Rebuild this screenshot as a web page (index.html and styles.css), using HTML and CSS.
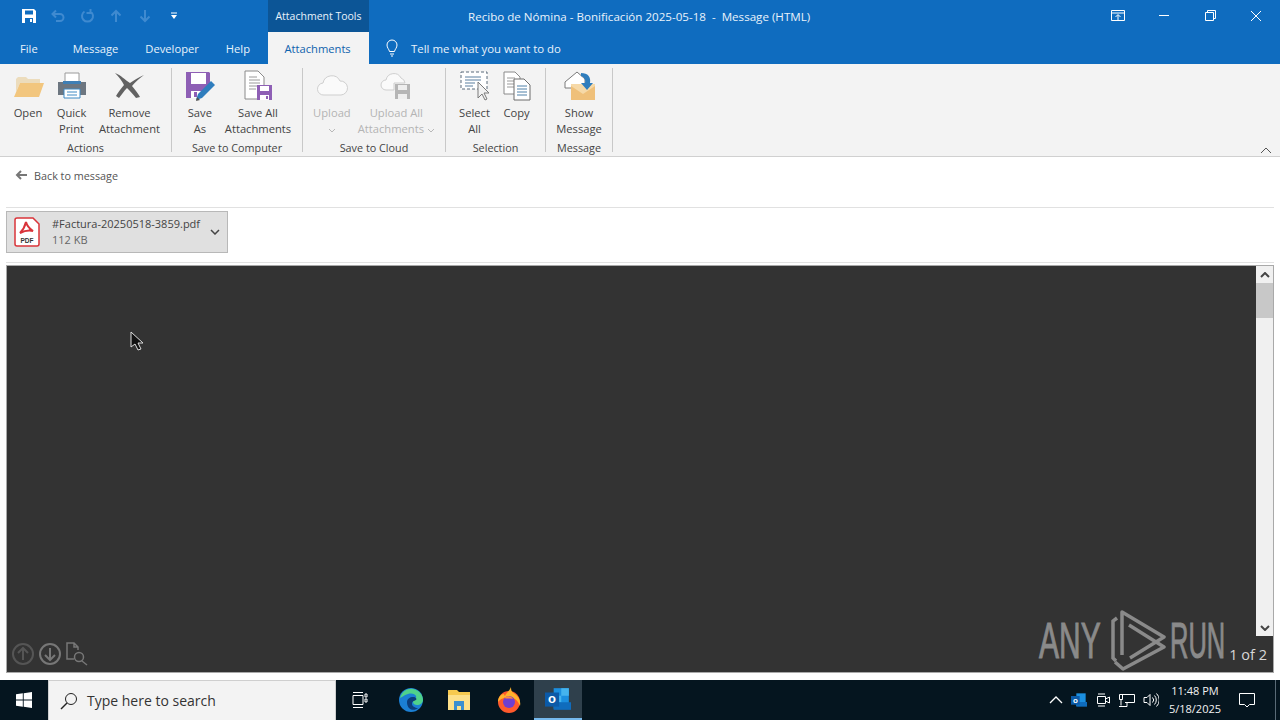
FILE: index.html
```html
<!DOCTYPE html>
<html lang="es">
<head>
  <meta charset="UTF-8" />
  <title>Recibo de Nómina - Bonificación 2025-05-18 - Message (HTML)</title>
  <link rel="stylesheet" href="styles.css">
</head>
<body>
  <div class="window">
    <div class="title-bar">
      <div class="qat">
        <svg class="qat-save" width="16" height="16" viewBox="0 0 16 16"><path d="M1 1h12l2 2v12H1z" fill="#fff"/><path d="M4 2.500h8v4H4z" fill="#0f6cbf"/><path d="M4 10h8v5H4z" fill="#0f6cbf"/><path d="M9 11h2v3H9z" fill="#fff"/></svg>
        <svg class="qat-dim" width="16" height="16" viewBox="0 0 16 16"><path d="M3 6h7a3.500 3.500 0 0 1 0 7H6M6 2.500 2.500 6 6 9.500" fill="none" stroke="#3f8ad0" stroke-width="2"/></svg>
        <svg class="qat-dim" width="16" height="16" viewBox="0 0 16 16"><path d="M11.500 3.500a5.500 5.500 0 1 1-6 0M11.500 1v4h-4" fill="none" stroke="#3f8ad0" stroke-width="2"/></svg>
        <svg class="qat-dim" width="16" height="16" viewBox="0 0 16 16"><path d="M8 14V3M3.500 7.500 8 3l4.500 4.500" fill="none" stroke="#3f8ad0" stroke-width="2"/></svg>
        <svg class="qat-dim" width="16" height="16" viewBox="0 0 16 16"><path d="M8 2v11M3.500 8.500 8 13l4.500-4.500" fill="none" stroke="#3f8ad0" stroke-width="2"/></svg>
        <svg class="qat-more" width="16" height="16" viewBox="0 0 16 16"><path d="M5 4.500h6v1H5zM5 7h6L8 11z" fill="#fff"/></svg>
      </div>
      <div class="tool-tab">Attachment Tools</div>
      <div class="doc-title">Recibo de Nómina - Bonificación 2025-05-18&nbsp; - &nbsp;Message (HTML)</div>
      <div class="win-controls">
        <svg width="46" height="32" viewBox="0 0 46 32"><path d="M16.500 10.500h13v10h-13zM16.500 13h13M23 20v-5M20.500 17l2.500-2.500 2.500 2.500" fill="none" stroke="#fff"/></svg>
        <svg width="46" height="32" viewBox="0 0 46 32"><path d="M18 15.500h10" stroke="#fff"/></svg>
        <svg width="46" height="32" viewBox="0 0 46 32"><path d="M18.500 12.500h8v8h-8zM20.500 12.500v-2h8v8h-2" fill="none" stroke="#fff"/></svg>
        <svg width="46" height="32" viewBox="0 0 46 32"><path d="M18 11l10 10M28 11 18 21" stroke="#fff"/></svg>
      </div>
    </div>

    <div class="tab-row">
      <span class="tab tab-file">File</span>
      <span class="tab tab-message">Message</span>
      <span class="tab tab-dev">Developer</span>
      <span class="tab tab-help">Help</span>
      <span class="tab tab-active">Attachments</span>
      <svg class="bulb" width="16" height="18" viewBox="0 0 16 18"><path d="M5.500 12.500C5 10 3 9 3 6a5 5 0 0 1 10 0c0 3-2 4-2.500 6.500zM6 15h4M7 17h2" fill="none" stroke="#fff"/></svg>
      <span class="tell">Tell me what you want to do</span>
    </div>

    <div class="ribbon">
      <div class="group group-actions">
        <div class="buttons">
          <div class="rb">
            <svg width="32" height="32" viewBox="0 0 32 32"><path d="M4 22V9l2-2h8l2 2h12v4H8z" fill="#ecdcbc"/><path d="M2 27 8 13h24l-5 14z" fill="#f2c67e"/></svg>
            <span>Open</span>
          </div>
          <div class="rb">
            <svg width="32" height="32" viewBox="0 0 32 32"><path d="M9 3h14v9H9z" fill="#fff" stroke="#9a9a9a"/><path d="M2 12h28v13H2z" fill="#6d7680"/><path d="M7 11h18v3H7z" fill="#3f7fb5"/><path d="M8 19h16v9H8z" fill="#fff" stroke="#3f8ac4"/><path d="M11 22h10M11 25h10" stroke="#3f8ac4"/></svg>
            <span>Quick<br>Print</span>
          </div>
          <div class="rb">
            <svg width="32" height="32" viewBox="0 0 32 32"><path d="M2 3c6 2 10 7 15 10 4-3 8-5 14-8-5 4-9 7-12 11 3 4 6 7 8 11l-4 1c-3-4-6-7-9-10-3 3-5 6-8 10l-3-2c2-4 5-7 8-11C9 11 6 7 2 3z" fill="#626262"/></svg>
            <span>Remove<br>Attachment</span>
          </div>
        </div>
        <div class="group-name">Actions</div>
      </div>

      <div class="group group-computer">
        <div class="buttons">
          <div class="rb">
            <svg width="32" height="32" viewBox="0 0 32 32"><path d="M2 2h23l1 1v12L12 28H2z" fill="#8e5fb5"/><path d="M7 3h15v11H7z" fill="#fff"/><path d="M7 21h11v7H7z" fill="#fff"/><path d="M10 22h3v5h-3z" fill="#8e5fb5"/><path d="M12 30l2-6 13-13 4 4-13 13z" fill="#2f7dbd"/><path d="M12 31l1-4 3 3z" fill="#555"/></svg>
            <span>Save<br>As</span>
          </div>
          <div class="rb">
            <svg width="32" height="32" viewBox="0 0 32 32"><path d="M3 1h13l6 6v22H3z" fill="#fff" stroke="#8a8a8a"/><path d="M7 7h8M7 10h11M7 13h11M7 16h11M7 19h7" stroke="#9a9a9a"/><path d="M15 15h15v15H15z" fill="#8e5fb5"/><path d="M18 16h9v5h-9zM18 25h9v5h-9z" fill="#fff"/><path d="M24 26h2v3h-2z" fill="#8e5fb5"/></svg>
            <span>Save All<br>Attachments</span>
          </div>
        </div>
        <div class="group-name">Save to Computer</div>
      </div>

      <div class="group group-cloud">
        <div class="buttons">
          <div class="rb rb-off">
            <svg width="32" height="32" viewBox="0 0 32 32"><path d="M8 25a6 6 0 0 1-1-12 9 9 0 0 1 17-2 7 7 0 0 1 1 14z" fill="#fafafa" stroke="#cfcfcf"/></svg>
            <span>Upload<br><svg class="drop" width="8" height="5" viewBox="0 0 8 5"><path d="M1 1l3 3 3-3" fill="none" stroke="#b8b8b8"/></svg></span>
          </div>
          <div class="rb rb-off">
            <svg width="32" height="32" viewBox="0 0 32 32"><path d="M6 20a5 5 0 0 1 0-10 8 8 0 0 1 15-2 6 6 0 0 1 4 5H14v7z" fill="#fafafa" stroke="#cfcfcf"/><path d="M15 14h15v15H15z" fill="#b5b5b5"/><path d="M18 15h9v5h-9zM18 24h9v5h-9z" fill="#eee"/></svg>
            <span>Upload All<br>Attachments <svg class="drop" width="8" height="5" viewBox="0 0 8 5"><path d="M1 1l3 3 3-3" fill="none" stroke="#b8b8b8"/></svg></span>
          </div>
        </div>
        <div class="group-name">Save to Cloud</div>
      </div>

      <div class="group group-selection">
        <div class="buttons">
          <div class="rb">
            <svg width="32" height="32" viewBox="0 0 32 32"><path d="M2 2h26v17H2z" fill="#fff" stroke="#5b6b7a" stroke-dasharray="3 2"/><path d="M6 7h16M6 10h16M6 13h10M6 16h8" stroke="#5b7f9f"/><path d="M19 12v16l4-4 3 6 2-1-3-6h5z" fill="#f2f2f2" stroke="#7a7a7a"/></svg>
            <span>Select<br>All</span>
          </div>
          <div class="rb">
            <svg width="32" height="32" viewBox="0 0 32 32"><path d="M3 2h11l5 5v17H3z" fill="#fff" stroke="#8a8a8a"/><path d="M6 8h8M6 11h10M6 14h10M6 17h10" stroke="#9a9a9a"/><path d="M13 9h10l6 6v15H13z" fill="#fff" stroke="#6d6d6d"/><path d="M16 16h10M16 19h10M16 22h10M16 25h10" stroke="#4e80a8"/></svg>
            <span>Copy</span>
          </div>
        </div>
        <div class="group-name">Selection</div>
      </div>

      <div class="group group-message">
        <div class="buttons">
          <div class="rb">
            <svg width="32" height="32" viewBox="0 0 32 32"><path d="M2 12 14 2l8 7v9H2z" fill="#fff" stroke="#7a7a7a"/><path d="M8 14h24v16H8z" fill="#efc07a"/><path d="M8 16l12 8 12-8v-2H8z" fill="#f6d9a8"/><path d="M18 3c7 0 10 4 9 10h3l-6 7-6-7h4c1-3-1-6-4-7z" fill="#2f7dbd"/></svg>
            <span>Show<br>Message</span>
          </div>
        </div>
        <div class="group-name">Message</div>
      </div>

      <svg class="collapse" width="12" height="8" viewBox="0 0 12 8"><path d="M1 7l5-5 5 5" fill="none" stroke="#555"/></svg>
    </div>

    <div class="back-row">
      <svg width="12" height="10" viewBox="0 0 12 10"><path d="M12 5H3M6 1 2 5l4 4" fill="none" stroke="#777" stroke-width="2"/></svg>
      <span>Back to message</span>
    </div>

    <div class="attach-row">
      <div class="chip">
        <svg width="26" height="30" viewBox="0 0 26 30"><path d="M3 1h16l6 6v20a2 2 0 0 1-2 2H3a2 2 0 0 1-2-2V3a2 2 0 0 1 2-2z" fill="#fff" stroke="#d9343a" stroke-width="1.500"/><path d="M12 5c-1 4-3 8-6 11 4-2 9-3 13-2-3-2-6-5-7-9z" fill="none" stroke="#d9343a" stroke-width="2"/><text x="13" y="26" class="chip-pdf">PDF</text></svg>
        <div class="chip-text">
          <div class="chip-name">#Factura-20250518-3859.pdf</div>
          <div class="chip-size">112 KB</div>
        </div>
        <svg class="chip-arrow" width="10" height="6" viewBox="0 0 10 6"><path d="M1 1l4 4 4-4" fill="none" stroke="#444" stroke-width="1.500"/></svg>
      </div>
    </div>

    <div class="viewer">
      <div class="doc-area">
        <div class="doc-tools">
          <svg width="24" height="24" viewBox="0 0 24 24"><circle cx="12" cy="12" r="10" fill="none" stroke="#555" stroke-width="2"/><path d="M12 18V7M7 11l5-5 5 5" fill="none" stroke="#555" stroke-width="2"/></svg>
          <svg width="24" height="24" viewBox="0 0 24 24"><circle cx="12" cy="12" r="10" fill="none" stroke="#777" stroke-width="2"/><path d="M12 6v11M7 13l5 5 5-5" fill="none" stroke="#777" stroke-width="2"/></svg>
          <svg width="24" height="24" viewBox="0 0 24 24"><path d="M9 17H2V1h7l4 4v3M9 1v4h4" fill="none" stroke="#777" stroke-width="1.500"/><circle cx="14" cy="15" r="4.500" fill="none" stroke="#777" stroke-width="1.500"/><path d="M17 19l5 4" stroke="#777" stroke-width="1.500"/></svg>
        </div>
      </div>
      <div class="scrollbar">
        <div class="sb-btn"><svg width="10" height="6" viewBox="0 0 10 6"><path d="M1 5l4-4 4 4" fill="none" stroke="#444" stroke-width="2"/></svg></div>
        <div class="sb-thumb"></div>
        <div class="sb-track"></div>
        <div class="sb-btn"><svg width="10" height="6" viewBox="0 0 10 6"><path d="M1 1l4 4 4-4" fill="none" stroke="#444" stroke-width="2"/></svg></div>
      </div>
      <div class="watermark">
        <span class="wm-text wm-any">ANY</span>
        <svg class="wm-logo" width="56" height="66" viewBox="0 0 56 66"><path d="M12 47V4L54 29 20 50M19 17 54 39 13 61 5 54" fill="none" stroke="#8a8a8a" stroke-width="3.500" stroke-linejoin="round"/><path d="M7 10 3 13V50L6 53" fill="none" stroke="#8a8a8a" stroke-width="3.500"/></svg>
        <span class="wm-text wm-run">RUN</span>
      </div>
      <div class="page-count">1 of 2</div>
      <svg class="cursor" width="14" height="20" viewBox="0 0 14 20"><path d="M1 1v15l4-3 3 6 3-1-3-6h5z" fill="#111" stroke="#ddd"/></svg>
    </div>
  </div>

  <div class="taskbar">
    <div class="start">
      <svg width="16" height="16" viewBox="0 0 16 16"><path d="M0 2.300 6.800 1.300v6.200H0zM7.700 1.200 16 0v7.500H7.700zM0 8.400h6.800v6.300L0 13.700zM7.700 8.400H16V16l-8.300-1.200z" fill="#fff"/></svg>
    </div>
    <div class="search">
      <svg width="18" height="18" viewBox="0 0 18 18"><circle cx="11" cy="7" r="5.500" fill="none" stroke="#222"/><path d="M7 11l-6 6" stroke="#222" stroke-width="1.500"/></svg>
      <span>Type here to search</span>
    </div>
    <div class="task-item">
      <svg width="16" height="16" viewBox="0 0 16 16"><path d="M1 3.500h10v9H1zM1 .500h10M1 15.500h10M13 2h2v3h-2zM13 7h2v3h-2z" fill="none" stroke="#fff"/></svg>
    </div>
    <div class="task-item task-edge">
      <svg width="24" height="24" viewBox="0 0 24 24"><circle cx="12" cy="12" r="12" fill="#1b7fd4"/><path d="M1 10C3 3 9 0 14 1c6 1 10 6 10 11 0 3-3 5-6 5-2 0-4-1-4-3 0-3 4-3 3-6-1-2-4-3-8-2-4 1-7 4-8 4z" fill="#4fd18b"/><path d="M8 14c0-3 3-5 6-5s4 2 3 3c-2 1-4 1-4 4 0 2 3 4 6 4-3 3-11 3-11-6z" fill="#0c3d7a"/></svg>
    </div>
    <div class="task-item task-files">
      <svg width="24" height="22" viewBox="0 0 24 22"><path d="M1 1h9l2 2h11v18H1z" fill="#f6c94f"/><path d="M1 6h22v15H1z" fill="#fde08a"/><path d="M7 12h10v9h-3v-4h-4v4H7z" fill="#3b8fd0"/></svg>
    </div>
    <div class="task-item task-fox">
      <svg width="24" height="26" viewBox="0 0 24 26"><circle cx="12" cy="15" r="11" fill="#ff5a2c"/><path d="M1 15C1 10 4 7 7 7c0 1 1 2 1 2 1-3 4-4 6-9 0 4 1 5 4 7 4 3 6 7 5 12-2-6-7-9-11-9S3 12 1 15z" fill="#ffb32c"/><circle cx="12" cy="15" r="6" fill="#6f3fd0"/><path d="M7 11c3-3 8-2 9 1-3-1-6 0-9-1z" fill="#ff8a3c"/></svg>
    </div>
    <div class="task-item task-outlook">
      <svg width="26" height="26" viewBox="0 0 24 24"><path d="M8 2h14v19H8z" fill="#1b8fe0"/><path d="M15 2h7v7h-7zM8 9h7v6H8z" fill="#45b4ee"/><path d="M8 15h16v7H8z" fill="#0f6cbd"/><path d="M0 6h13v13H0z" fill="#0b5aa8"/><text x="6.500" y="16" class="ol-letter">o</text></svg>
    </div>
    <div class="tray">
      <svg class="tray-icon" width="14" height="8" viewBox="0 0 14 8"><path d="M1 7l6-6 6 6" fill="none" stroke="#fff" stroke-width="1.300"/></svg>
      <svg class="tray-icon" width="16" height="16" viewBox="0 0 24 24"><path d="M8 2h14v19H8z" fill="#1b8fe0"/><path d="M8 15h16v7H8z" fill="#0f6cbd"/><path d="M0 6h13v13H0z" fill="#0b5aa8"/><text x="6.500" y="16" class="ol-letter">o</text></svg>
      <svg class="tray-icon" width="16" height="16" viewBox="0 0 16 16"><path d="M2.500 4.500h8v7h-8zM10.500 7l4-2v6l-4-2M3 2h7M3 14h7" fill="none" stroke="#fff"/></svg>
      <svg class="tray-icon" width="16" height="16" viewBox="0 0 16 16"><path d="M.500 2.500h15v8H6M.500 2.500v5h3v-5M2 7.500v6M0 14.500h8M8 10.500v4" fill="none" stroke="#fff"/></svg>
      <svg class="tray-icon" width="16" height="16" viewBox="0 0 16 16"><path d="M1 5.500h3l3-3v11l-3-3H1zM9.500 5.500a3.500 3.500 0 0 1 0 5M11.500 3.500a6.500 6.500 0 0 1 0 9M13.500 1.500a9 9 0 0 1 0 13" fill="none" stroke="#fff"/></svg>
      <div class="clock"><div>11:48 PM</div><div>5/18/2025</div></div>
      <svg class="notify" width="16" height="16" viewBox="0 0 16 16"><path d="M.500 1.500h15v11h-5l-2.500 2.500-2.500-2.500h-5z" fill="none" stroke="#fff"/></svg>
      <div class="show-desktop"></div>
    </div>
  </div>
</body>
</html>
```

FILE: styles.css
```css
* { box-sizing: border-box; }
html, body {
  margin: 0;
  padding: 0;
  width: 1280px;
  height: 720px;
  overflow: hidden;
  font-family: "Open Sans", "Noto Sans", sans-serif;
  font-size: 11.5px;
  color: #444;
  background: #fff;
}
svg { display: block; flex: none; }
.window {
  height: 680px;
  display: flex;
  flex-direction: column;
}

/* title bar */
.title-bar {
  height: 32px;
  background: #0f6cbf;
  display: flex;
  color: #fff;
}
.qat {
  width: 268px;
  display: flex;
  align-items: center;
  padding-left: 21px;
  gap: 13px;
}
.tool-tab {
  width: 101px;
  background: #0c5596;
  font-size: 10.5px;
  display: flex;
  align-items: center;
  justify-content: center;
  color: #e8f2fb;
}
.doc-title {
  margin-left: 99px;
  line-height: 33px;
  font-size: 11.6px;
  color: #e8f2fb;
}
.win-controls {
  margin-left: auto;
  display: flex;
  margin-right: 1px;
}

/* tabs */
.tab-row {
  height: 32px;
  background: #0f6cbf;
  display: flex;
  align-items: center;
  color: #e8f2fb;
}
.tab { display: block; line-height: 33px; height: 32px; font-size: 11.2px; }
.tab-file { margin-left: 20px; }
.tab-message { margin-left: 35px; }
.tab-dev { margin-left: 27px; }
.tab-help { margin-left: 27px; }
.tab-active {
  margin-left: 18px;
  width: 101px;
  text-align: center;
  background: #f3f3f3;
  color: #0f62ad;
  padding-right: 2px;
}
.bulb { margin-left: 15px; }
.tell { margin-left: 11px; font-size: 11.4px; }

/* ribbon */
.ribbon {
  position: relative;
  height: 93px;
  background: #f3f3f3;
  border-bottom: 1px solid #d0d0d0;
  display: flex;
  padding-top: 4px;
}
.group {
  height: 84px;
  display: flex;
  flex-direction: column;
  border-right: 1px solid #c8c8c8;
}
.group-actions { width: 172px; }
.group-computer { width: 131px; }
.group-cloud { width: 143px; }
.group-selection { width: 100px; }
.group-message { width: 67px; }
.buttons {
  flex: 1;
  display: flex;
  justify-content: center;
  gap: 9px;
}
.group-actions .buttons { justify-content: flex-start; gap: 11.500px; padding-left: 12px; }
.group-computer .buttons { padding-left: 1px; }
.group-cloud .buttons { gap: 7px; }
.group-selection .buttons { gap: 10px; }
.rb {
  display: flex;
  flex-direction: column;
  align-items: center;
  text-align: center;
  line-height: 16px;
  padding-top: 2px;
  font-size: 11.2px;
}
.rb span { margin-top: 3px; }
.rb-off { color: #b4b4b4; }
.drop { display: inline-block; vertical-align: middle; }
.group-name {
  text-align: center;
  line-height: 16px;
  font-size: 10.8px;
  margin-bottom: -4px;
}
.collapse {
  position: absolute;
  right: 8px;
  top: 82px;
}

/* back row */
.back-row {
  height: 51px;
  margin: 0 6px;
  border-bottom: 1px solid #e1e1e1;
  display: flex;
  align-items: center;
  padding: 0 0 14px 9px;
  gap: 7px;
  font-size: 10.8px;
  color: #555;
}

/* attachment */
.attach-row {
  height: 55px;
  margin: 0 6px;
  padding-top: 3px;
  border-bottom: 1px solid #e1e1e1;
}
.chip {
  width: 222px;
  height: 42px;
  background: #e0e0e0;
  border: 1px solid #b8b8b8;
  display: flex;
  align-items: center;
  padding-left: 7px;
}
.chip-pdf {
  font-family: "Liberation Sans", sans-serif;
  font-size: 6.500px;
  font-weight: bold;
  text-anchor: middle;
  fill: #333;
}
.chip-text { margin-left: 12px; line-height: 16px; font-size: 11px; }
.chip-name { color: #444; }
.chip-size { color: #666; }
.chip-arrow { margin-left: auto; margin-right: 7px; }

/* viewer */
.viewer {
  position: relative;
  margin: 2px 6px 7px;
  flex: 1;
  border: 1px solid #a9a9a9;
  background: #333;
  display: flex;
}
.doc-area {
  flex: 1;
  position: relative;
  display: flex;
  align-items: flex-end;
}
.doc-tools {
  display: flex;
  gap: 3px;
  padding: 0 0 6px 4px;
}
.scrollbar {
  width: 17px;
  height: 370px;
  background: #f0f0f0;
  display: flex;
  flex-direction: column;
}
.sb-btn {
  height: 17px;
  display: flex;
  align-items: center;
  justify-content: center;
}
.sb-thumb { height: 35px; background: #c8c8c8; }
.sb-track { flex: 1; }
.watermark {
  position: absolute;
  left: 1032px;
  top: 342px;
  display: flex;
  align-items: center;
}
.wm-text {
  font-family: "Liberation Sans", sans-serif;
  font-size: 50px;
  line-height: 66px;
  color: #8a8a8a;
  -webkit-text-stroke: 1px #8a8a8a;
  display: block;
  transform-origin: left center;
  white-space: nowrap;
}
.wm-any { width: 71px; transform: scaleX(0.6); }
.wm-run { width: 54px; margin-left: 4px; transform: scaleX(0.51); }
.page-count {
  position: absolute;
  right: 6px;
  top: 380px;
  font-size: 14.5px;
  line-height: 18px;
  color: #d8d8d8;
}
.cursor {
  position: absolute;
  left: 123px;
  top: 65px;
}

/* taskbar */
.taskbar {
  height: 40px;
  background: #05151f;
  display: flex;
  align-items: center;
  color: #fff;
}
.start {
  width: 48px;
  display: flex;
  justify-content: center;
}
.search {
  width: 288px;
  height: 40px;
  background: #f3f3f3;
  border: 1px solid #cfcfcf;
  border-bottom: none;
  display: flex;
  align-items: center;
  padding-left: 11px;
  gap: 9px;
  font-size: 14px;
  color: #333;
}
.task-item {
  width: 48px;
  height: 40px;
  display: flex;
  align-items: center;
  justify-content: center;
}
.task-edge { margin-left: 3px; }
.task-fox { margin-left: 2px; }
.task-outlook {
  margin-left: 1px;
  background: #2f404c;
  border-bottom: 2px solid #76b9ed;
}
.ol-letter {
  font-family: "Liberation Sans", sans-serif;
  font-size: 12px;
  font-weight: bold;
  text-anchor: middle;
  fill: #fff;
}
.tray {
  margin-left: auto;
  display: flex;
  align-items: center;
  height: 40px;
}
.tray-icon { margin-right: 8px; }
.clock {
  width: 56px;
  text-align: center;
  font-size: 11px;
  line-height: 18px;
  color: #f2f2f2;
}
.notify { margin-left: 16px; margin-right: 20px; }
.show-desktop {
  width: 5px;
  height: 40px;
  border-left: 1px solid #5a6a76;
}
```
